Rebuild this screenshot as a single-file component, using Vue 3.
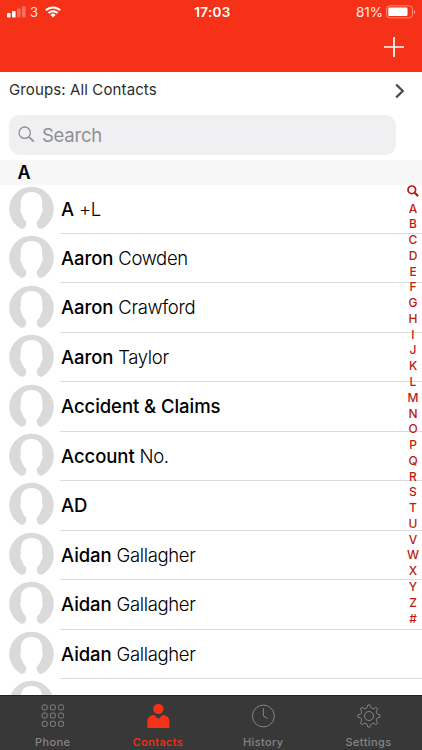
<script setup>
const contacts = [
  { first: 'A', last: '+L' },
  { first: 'Aaron', last: 'Cowden' },
  { first: 'Aaron', last: 'Crawford' },
  { first: 'Aaron', last: 'Taylor' },
  { first: 'Accident & Claims', last: '' },
  { first: 'Account', last: 'No.' },
  { first: 'AD', last: '' },
  { first: 'Aidan', last: 'Gallagher' },
  { first: 'Aidan', last: 'Gallagher' },
  { first: 'Aidan', last: 'Gallagher' },
  { first: '', last: '' },
]
const letters = 'ABCDEFGHIJKLMNOPQRSTUVWXYZ#'.split('')
const dots = [3.2, 11.4, 19.6]

// Outline of a cog with eight teeth around (12, 12)
const polar = (r, deg) => {
  const a = (deg * Math.PI) / 180
  return `${(12 + r * Math.cos(a)).toFixed(2)} ${(12 + r * Math.sin(a)).toFixed(2)}`
}
const gear =
  Array.from({ length: 8 }, (_, i) => {
    const a = i * 45
    return `${i ? 'L' : 'M'}${polar(8.9, a - 11)}L${polar(10.9, a - 7)}Q${polar(11.6, a)} ${polar(10.9, a + 7)}L${polar(8.9, a + 11)}Q${polar(7.5, a + 22.5)} ${polar(8.9, a + 34)}`
  }).join('') + 'Z'
</script>

<template>
  <div class="screen">
    <header class="top">
      <div class="status">
        <div class="carrier">
          <svg class="signal" width="19" height="12" viewBox="0 0 19 12" fill="#fff">
            <rect x="0" y="7" width="3.6" height="4.5" rx="1" />
            <rect x="5" y="5" width="3.6" height="6.5" rx="1" />
            <rect x="10" y="2.6" width="3.6" height="8.9" rx="1" opacity=".3" />
            <rect x="15" y="0.3" width="3.6" height="11.2" rx="1" opacity=".3" />
          </svg>
          <span>3</span>
          <svg class="wifi" width="16" height="12" viewBox="0 0 16 12">
            <g fill="none" stroke="#fff" stroke-width="2">
              <path d="M.8 4.3a10.4 10.4 0 0 1 14.4 0" />
              <path d="M3.4 7a6.6 6.6 0 0 1 9.2 0" />
            </g>
            <path d="M8 11.6L5.4 8.9a3.7 3.7 0 0 1 5.2 0z" fill="#fff" />
          </svg>
        </div>
        <div class="time">17:03</div>
        <div class="power">
          <span>81%</span>
          <svg width="30" height="14" viewBox="0 0 30 14">
            <rect x=".6" y=".8" width="25.8" height="12" rx="3.2" fill="none" stroke="#fff" stroke-opacity=".45" />
            <rect x="2.3" y="2.5" width="19.2" height="8.6" rx="1.3" fill="#fff" />
            <path d="M27.8 4.7c2 .8 2 3.4 0 4.2z" fill="#fff" opacity=".5" />
          </svg>
        </div>
      </div>
      <div class="nav">
        <svg width="20" height="20" viewBox="0 0 20 20" stroke="#fff" stroke-width="1.7">
          <path d="M0 10h20M10 0v20" />
        </svg>
      </div>
    </header>

    <div class="groups">
      <span>Groups: All Contacts</span>
      <svg width="10" height="16" viewBox="0 0 10 16" fill="none" stroke="#4a4a4a" stroke-width="2.2">
        <path d="M1.2 1.6L7.8 8l-6.6 6.4" />
      </svg>
    </div>

    <div class="search">
      <svg width="17" height="17" viewBox="0 0 17 17" fill="none" stroke="#8e8e93" stroke-width="1.3">
        <circle cx="6.7" cy="6.7" r="5.7" />
        <path d="M10.8 10.9l5 4.8" stroke-width="1.6" />
      </svg>
      <span>Search</span>
    </div>

    <div class="section">A</div>

    <main class="body">
      <ul class="list">
        <li v-for="(c, i) in contacts" :key="i" class="row">
          <svg class="avatar" width="45" height="45" viewBox="0 0 45 45">
            <path
              d="M16.4 39.8C15.2 41.8 13.6 42.1 11.6 41.4A22.3 22.3 0 1 1 33.4 41.4C31.4 42.1 29.8 41.8 28.6 39.8C27.6 38 27.6 36.2 28 34.6C30 32.6 31.6 30 32.2 27.2C33.2 26.4 34 23.4 33.7 21.8C33.5 21.2 33.3 21 33.1 20.8C33.5 16.5 33.3 12.6 31.9 9.9C30.2 6.7 26.8 4.9 22.5 4.9S14.8 6.7 13.1 9.9C11.7 12.6 11.5 16.5 11.9 20.8C11.7 21 11.5 21.2 11.3 21.8C11 23.4 11.8 26.4 12.8 27.2C13.4 30 15 32.6 17 34.6C17.4 36.2 17.4 38 16.4 39.8Z"
              fill="#dadada"
            />
          </svg>
          <div class="name"><b>{{ c.first }}</b>&nbsp;<span>{{ c.last }}</span></div>
        </li>
      </ul>
      <nav class="index">
        <svg width="12" height="12" viewBox="0 0 12 12" fill="none" stroke="#bd1a10">
          <circle cx="4.8" cy="4.8" r="3.8" stroke-width="1.7" />
          <path d="M7.7 7.7l3.4 3.4" stroke-width="2.2" />
        </svg>
        <span v-for="l in letters" :key="l">{{ l }}</span>
      </nav>
    </main>

    <footer class="tabs">
      <div class="tab">
        <svg width="24" height="25" viewBox="0 0 24 25" fill="none" stroke="#858585" stroke-width="1">
          <template v-for="y in dots" :key="y">
            <rect v-for="x in dots" :key="x" :x="x - 2" :y="y - 2.3" width="5" height="5" rx="1.7" />
          </template>
        </svg>
        <span>Phone</span>
      </div>
      <div class="tab active">
        <svg width="24" height="25" viewBox="0 0 24 25" fill="#f53218">
          <circle cx="12.4" cy="4.9" r="5.2" />
          <path d="M1.4 24v-6.5C1.4 13.6 4.4 11.1 8.4 11.1l4 3.9 4-3.9c4 0 7 2.5 7 6.4V24z" />
        </svg>
        <span>Contacts</span>
      </div>
      <div class="tab">
        <svg width="24" height="25" viewBox="0 0 24 25" fill="none" stroke="#858585" stroke-width="1">
          <circle cx="12.4" cy="12" r="10.9" />
          <path d="M12.4 4.2V12l4.2 2.5" />
        </svg>
        <span>History</span>
      </div>
      <div class="tab">
        <svg width="24" height="25" viewBox="0 0 24 25" fill="none" stroke="#858585" stroke-width="1" stroke-linejoin="round">
          <circle cx="12" cy="12" r="4.5" />
          <path :d="gear" />
        </svg>
        <span>Settings</span>
      </div>
    </footer>
  </div>
</template>

<style>
body {
  margin: 0;
  overflow: hidden;
}
</style>

<style scoped>
.screen {
  width: 422px;
  height: 750px;
  display: flex;
  flex-direction: column;
  overflow: hidden;
  background: #fff;
  color: #000;
  font-family: Inter, sans-serif;
}
svg {
  display: block;
  flex: none;
  overflow: visible;
}
.top {
  flex: none;
  height: 72px;
  background: #f53218;
  color: #fff;
}
.status {
  height: 24px;
  display: grid;
  grid-template-columns: 1fr auto 1fr;
  align-items: center;
  padding: 0 6px 0 7px;
  font-size: 13px;
  line-height: 24px;
}
.carrier,
.power {
  display: flex;
  align-items: center;
}
.carrier span {
  margin: 0 7px 0 4px;
  opacity: .85;
}
.time {
  padding-left: 2px;
  font-weight: 600;
  font-size: 13.5px;
  letter-spacing: .3px;
}
.power {
  justify-content: flex-end;
  gap: 3px;
}
.power span {
  font-size: 13.5px;
  opacity: .9;
}
.nav {
  display: flex;
  justify-content: flex-end;
  padding: 13px 18px 0 0;
}
.groups {
  flex: none;
  box-sizing: border-box;
  height: 37px;
  display: flex;
  justify-content: space-between;
  align-items: center;
  padding: 0 17px 2px 9px;
  font-size: 15px;
  letter-spacing: .12px;
  color: #2c2c2c;
}
.groups svg {
  margin-top: 3px;
}
.search {
  flex: none;
  height: 40px;
  margin: 6px 26px 5px 9px;
  border-radius: 11px;
  background: #f0f0f2;
  display: flex;
  align-items: center;
  gap: 7px;
  padding: 0 0 1px 9px;
  box-sizing: border-box;
  font-size: 18.5px;
  letter-spacing: -.25px;
  color: #8e8e93;
}
.section {
  flex: none;
  height: 24.6px;
  line-height: 25px;
  padding-left: 17.5px;
  background: #f7f7f7;
  font-size: 18px;
  font-weight: 600;
}
.body {
  flex: 1;
  min-height: 0;
  position: relative;
  overflow: hidden;
}
.list {
  margin: 0;
  padding: 0;
  list-style: none;
}
.row {
  height: 49.45px;
  display: flex;
  padding-left: 9px;
}
.avatar {
  margin-top: 2.2px;
}
.name {
  flex: 1;
  margin-left: 6px;
  padding-left: 1px;
  border-bottom: 1px solid #dcdcdc;
  line-height: 49.4px;
  font-size: 18.5px;
  font-weight: 300;
  letter-spacing: -.35px;
  white-space: nowrap;
}
.name b {
  font-weight: 550;
  letter-spacing: -.06px;
}
.index {
  position: absolute;
  top: 0;
  right: 1px;
  width: 16px;
  display: flex;
  flex-direction: column;
  align-items: center;
  font-size: 12px;
  font-weight: 550;
  color: #bd1a10;
}
.index svg {
  margin: .5px 0 3.5px;
}
.index span {
  height: 15.77px;
  line-height: 15.77px;
}
.tabs {
  flex: none;
  height: 55.5px;
  display: flex;
  background: #383838;
  border-top: 1px solid #222;
  box-sizing: border-box;
}
.tab {
  width: 105.3px;
  display: flex;
  flex-direction: column;
  align-items: center;
  padding-top: 8px;
  box-sizing: border-box;
  font-size: 11px;
  font-weight: 550;
  letter-spacing: .4px;
  color: #858585;
}
.tab span {
  margin-top: 6px;
  line-height: 14px;
}
.active {
  color: #f53218;
}
</style>
